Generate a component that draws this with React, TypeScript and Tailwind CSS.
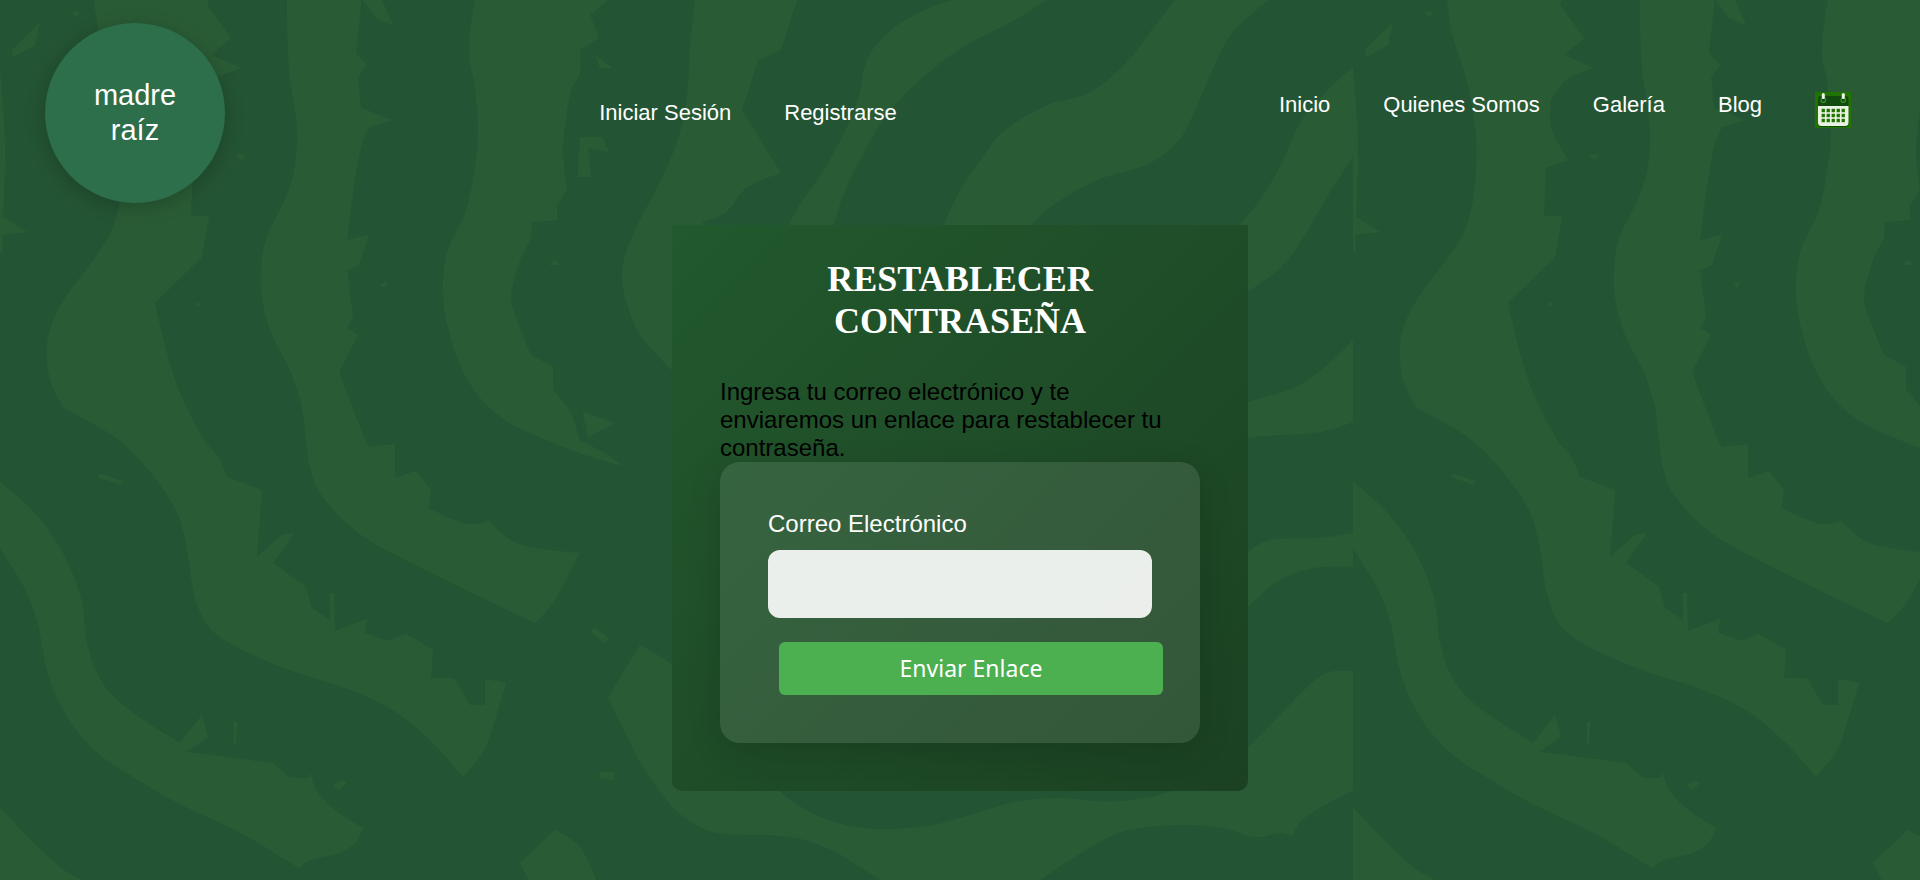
type Pt = [number, number];

const TILE_W = 1353;
const TILE_H = 880;

const SHAPES: string[] = [
  "94,0 100,37 113,77 123,133 123,173 119,207 107,240 62,303 49,333 47,357 51,383 64,408 90,422 119,440 151,473 176,510 186,543 194,593 204,620 220,637 253,655 298,673 351,690 396,712 433,743 463,777 484,750 494,723 506,683 485,679 485,705 470,705 454,678 431,678 433,650 406,634 388,641 365,633 367,619 335,631 334,593 330,593 330,620 312,608 306,587 273,563 294,533 282,535 257,557 262,490 227,477 218,457 204,440 180,393 168,357 155,303 202,257 209,216 191,216 193,168 215,160 198,127 198,100 213,80 241,68 211,55 231,38 207,5 209,0",
  "287,0 289,67 297,127 295,167 286,197 267,237 261,270 263,303 273,337 290,370 302,407 306,440 310,467 320,493 351,527 392,553 535,623 555,600 579,553 535,548 510,540 489,521 467,524 428,508 431,490 416,471 395,478 395,444 369,447 365,440 339,372 358,335 347,328 353,317 347,270 359,265 369,235 347,240 353,193 361,147 369,127 392,120 361,108 358,77 367,65 356,53 361,5 361,0",
  "475,0 469,50 475,87 478,133 473,180 465,213 447,253 443,290 447,323 461,367 482,400 510,423 547,440 580,453 622,466 608,455 579,440 571,413 553,390 553,367 531,355 518,323 511,297 520,260 531,237 531,222 557,220 557,205 567,190 563,147 571,90 580,73 580,50 599,38 590,15 608,0",
  "695,0 690,50 687,97 677,143 656,190 640,220 627,250 622,277 629,310 640,335 656,353 672,370 720,400 700,330 692,260 703,222 726,212 746,188 781,173 742,110 758,60 781,50 797,0",
  "954,0 901,23 881,40 867,60 858,100 844,133 824,170 803,200 789,225 770,290 820,290 834,225 844,193 860,160 881,123 909,90 958,50 1020,17 1046,0",
  "1175,0 1154,27 1126,63 1089,93 1048,105 1003,132 983,157 962,187 944,225 920,290 990,290 1032,225 1056,203 1097,180 1150,163 1179,140 1195,110 1211,73 1232,33 1269,0",
  "1353,67 1325,93 1300,123 1280,167 1260,200 1240,225 1180,290 1180,350 1248,292 1280,268 1300,243 1325,200 1353,157",
  "1353,340 1333,360 1304,383 1280,393 1248,402 1180,430 1180,460 1248,438 1280,435 1321,432 1353,422",
  "1353,533 1321,538 1280,539 1264,542 1248,552 1180,600 1180,680 1248,607 1280,580 1313,568 1353,567",
  "1353,671 1329,672 1313,682 1280,715 1248,747 1210,775 1175,790 1150,797 1109,802 1060,798 1016,802 979,812 934,825 893,829 856,827 820,817 795,803 779,790 740,730 672,665 640,645 608,698 629,740 640,762 669,803 693,823 718,833 791,837 832,850 860,867 881,880 1040,880 1081,853 1118,833 1146,827 1191,825 1224,828 1256,837 1280,833 1292,836 1302,820 1325,805 1353,790",
  "0,482 29,507 53,537 71,570 82,603 86,637 94,667 110,693 139,717 180,743 202,715 208,737 186,752 273,763 290,778 308,778 310,773 318,793 339,813 363,828 355,843 339,853 310,860 299,868 241,833 176,802 135,778 98,753 69,720 49,677 37,620 24,587 0,548",
  "0,807 24,833 61,868 82,880 0,880",
  "555,830 520,863 529,880 596,880 586,857 576,843",
  "0,70 4,120 5,160 3,217 27,232 2,235 3,253 0,253",
  "40,22 12,50 13,57 35,45",
  "363,0 382,0 393,25 376,18",
  "595,55 612,68 600,68",
  "580,137 602,137 609,152 588,148 591,177 578,177",
  "583,412 615,423 588,437",
  "100,474 122,481 121,485 98,477",
  "594,628 609,638 605,643 590,632",
  "600,772 614,772 613,780 599,778",
  "342,780 347,783 339,790 333,786",
  "234,722 237,722 236,745 234,745",
  "236,155 246,154 242,160",
  "549,265 556,260 560,265",
  "380,285 387,281 385,288",
  "72,12 79,12 77,18",
  "195,302 201,304 197,307",
];

function turn(a: Pt, b: Pt, c: Pt): number {
  const d = Math.abs(
    Math.atan2(c[1] - b[1], c[0] - b[0]) - Math.atan2(b[1] - a[1], b[0] - a[0]),
  );
  return d > Math.PI ? 2 * Math.PI - d : d;
}

/* Closed outline: gentle bends become curves, sharp ones stay corners. */
function outline(source: string): string {
  const pts = source.split(" ").map((p) => p.split(",").map(Number) as Pt);
  const n = pts.length;
  const at = (i: number) => pts[(i + n) % n];
  const tangent = (i: number): Pt => {
    const [a, b, c] = [at(i - 1), at(i), at(i + 1)];
    if (turn(a, b, c) > 0.55) return [0, 0];
    const len = Math.hypot(c[0] - a[0], c[1] - a[1]);
    return [(c[0] - a[0]) / len, (c[1] - a[1]) / len];
  };
  let d = `M${pts[0].join(" ")}`;
  for (let i = 0; i < n; i++) {
    const p = at(i);
    const q = at(i + 1);
    const reach = Math.hypot(q[0] - p[0], q[1] - p[1]) / 3;
    const t = tangent(i);
    const u = tangent(i + 1);
    d += `C${p[0] + t[0] * reach} ${p[1] + t[1] * reach} ${q[0] - u[0] * reach} ${q[1] - u[1] * reach} ${q[0]} ${q[1]}`;
  }
  return d + "Z";
}

const PATHS = SHAPES.map(outline);

function Backdrop() {
  return (
    <svg className="absolute inset-0 -z-10 h-full w-full" aria-hidden="true">
      <defs>
        <pattern id="roots" width={TILE_W} height={TILE_H} patternUnits="userSpaceOnUse">
          <rect width={TILE_W} height={TILE_H} fill="#235433" />
          {PATHS.map((d) => (
            <path key={d} d={d} fill="#295c35" />
          ))}
        </pattern>
      </defs>
      <rect width="100%" height="100%" fill="url(#roots)" />
    </svg>
  );
}

function CalendarIcon() {
  const cols = [8, 13, 18, 23, 28];
  const rows = [18.5, 23.5, 28.5];
  return (
    <svg viewBox="0 0 36 36" className="block size-9" aria-hidden="true">
      <rect width="36" height="36" fill="#1f7500" />
      <rect x="3" y="4" width="30.500" height="31" rx="3" fill="#134a10" />
      <path d="M3 14h30.500v16.500a3.500 3.500 0 0 1-3.500 3.500h-23.500a3.500 3.500 0 0 1-3.500-3.500z" fill="#eaf2e4" />
      <circle cx="8.300" cy="8" r="2.300" fill="#134a10" stroke="#2f9a25" strokeWidth="1.200" />
      <circle cx="28.300" cy="8" r="2.300" fill="#134a10" stroke="#2f9a25" strokeWidth="1.200" />
      <rect x="6.800" y="1" width="3" height="6" rx="1.500" fill="#f0f5ec" />
      <rect x="26.800" y="1" width="3" height="6" rx="1.500" fill="#f0f5ec" />
      {rows.map((y) =>
        cols.map((x) => (
          <rect key={`${x}-${y}`} x={x - 1.4} y={y - 1.7} width="3.300" height="3.400" fill="#1f7500" />
        )),
      )}
    </svg>
  );
}

const LINKS = ["Inicio", "Quienes Somos", "Galería", "Blog"];

export default function App() {
  return (
    <div className="relative isolate min-h-screen overflow-hidden bg-[#235433] font-['Liberation_Sans',Arial,sans-serif] text-white">
      <Backdrop />
      <header className="flex items-center justify-between pt-[23px] pr-[69px] pl-[45px]">
        <a
          href="#inicio"
          className="flex size-[180px] items-center justify-center rounded-full bg-[#2d6e4b] px-10 text-center text-[29px] leading-[35px] shadow-[0_4px_20px_rgba(0,0,0,0.2)]"
        >
          madre raíz
        </a>
        <nav className="flex gap-[53px] pr-2 text-[22px] leading-[26px]" aria-label="Cuenta">
          <a href="#iniciar-sesion">Iniciar Sesión</a>
          <a href="#registrarse">Registrarse</a>
        </nav>
        <nav className="flex gap-[53px] pb-[6px] text-[22px] leading-[26px]" aria-label="Principal">
          {LINKS.map((label) => (
            <a key={label} href={`#${label}`}>
              {label}
            </a>
          ))}
          <a href="#calendario" aria-label="Calendario">
            <CalendarIcon />
          </a>
        </nav>
      </header>

      <main className="mx-auto mt-[22px] w-3/10 rounded-b-[10px] bg-linear-135 from-[#22592d] to-[#1b4122] px-12 pt-[33px] pb-12">
        <h1 className="text-center font-['Liberation_Serif','Times_New_Roman',serif] text-[36px] leading-[42px] font-bold">
          RESTABLECER CONTRASEÑA
        </h1>
        <p className="mt-9 text-2xl leading-7 text-black">
          Ingresa tu correo electrónico y te enviaremos un enlace para restablecer tu contraseña.
        </p>
        <form
          className="rounded-[20px] bg-white/10 p-12 shadow-[0_8px_32px_rgba(0,0,0,0.15)]"
          onSubmit={(e) => e.preventDefault()}
        >
          <label htmlFor="correo" className="block text-2xl leading-7">
            Correo Electrónico
          </label>
          <input
            id="correo"
            type="email"
            className="mt-3 block h-[68px] w-full rounded-xl bg-white/90 px-4 text-2xl text-black outline-none"
          />
          <button
            type="submit"
            className="relative left-[11px] mt-6 block h-[53px] w-full rounded-md bg-[#4caf50] font-['Noto_Sans',sans-serif] text-[23px]"
          >
            Enviar Enlace
          </button>
        </form>
      </main>
    </div>
  );
}
